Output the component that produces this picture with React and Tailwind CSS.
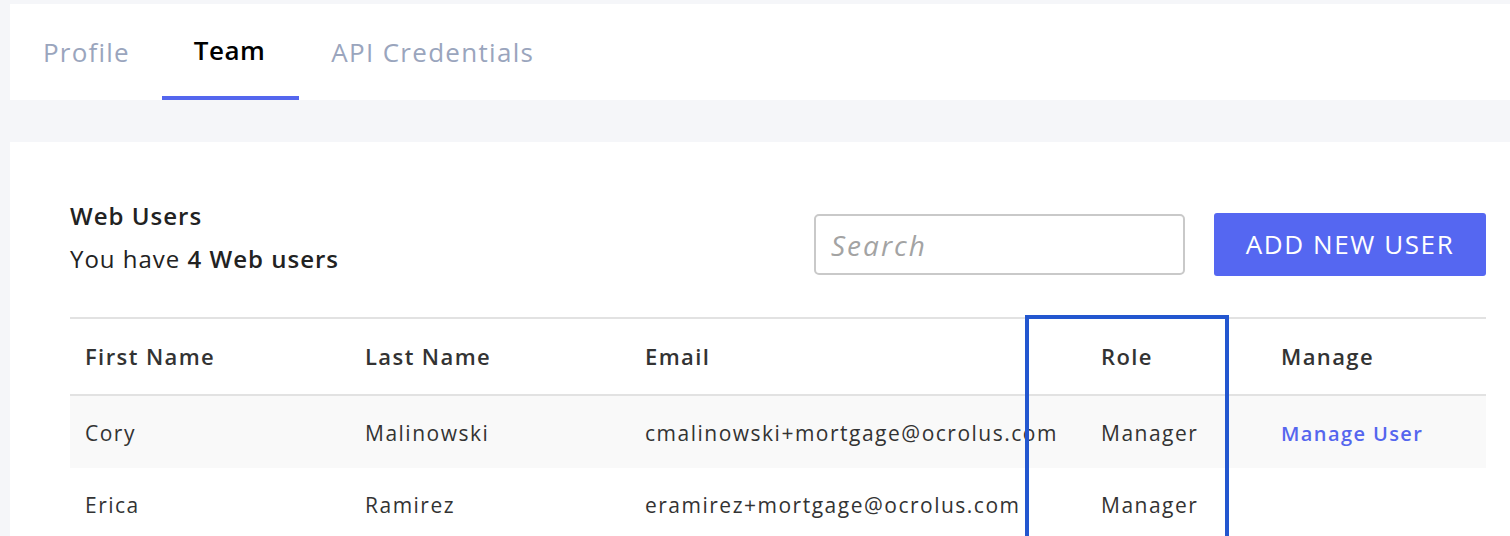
import React from "react";

const rows = [
  { first: "Cory", last: "Malinowski", email: "cmalinowski+mortgage@ocrolus.com", role: "Manager", manage: true },
  { first: "Erica", last: "Ramirez", email: "eramirez+mortgage@ocrolus.com", role: "Manager", manage: false },
];

export default function App() {
  return (
    <div className="min-h-[536px] bg-[#f5f6f9] pt-[4px] pl-[10px] overflow-hidden" style={{ fontFamily: '"Open Sans", "Liberation Sans", sans-serif' }}>
      <div className="bg-white h-[96px] flex items-end pl-[33px]">
        <div className="flex">
          <div className="h-[96px] flex items-center text-[26px] text-[#9aa5bd] tracking-[1.2px] pr-[32px]">Profile</div>
          <div className="h-[96px] flex flex-col">
            <div className="flex-1 flex items-center pl-[32px] pr-[34px] text-[26px] font-semibold text-black tracking-[0.5px]">Team</div>
            <div className="h-[4px] bg-[#5466ee]" />
          </div>
          <div className="h-[96px] flex items-center pl-[32px] text-[26px] text-[#9aa5bd] tracking-[1.3px]">API Credentials</div>
        </div>
      </div>
      <div className="h-[42px]" />
      <div className="bg-white pl-[60px] pr-[24px] pt-[59px] relative">
        <div className="flex items-start justify-between">
          <div className="flex flex-col">
            <div className="text-[24px] font-semibold text-[#222] leading-[30px] tracking-[1px]">Web Users</div>
            <div className="text-[24px] text-[#222] leading-[30px] mt-[13px] tracking-[1px]">
              You have <span className="font-semibold">4 Web users</span>
            </div>
          </div>
          <div className="flex items-center gap-[29px] mt-[12px]">
            <div className="w-[371px] h-[61px] border-2 border-[#c9c9c9] rounded-[5px] flex items-center px-[15px]">
              <span className="italic text-[28px] text-[#a3a3a3] tracking-[2px]">Search</span>
            </div>
            <button className="w-[272px] h-[63px] bg-[#5567f1] rounded-[3px] text-white text-[26px] font-medium tracking-[1.6px]">ADD NEW USER</button>
          </div>
        </div>
        <div className="mt-[41px] border-t-2 border-[#e2e2e2]">
          <div className="flex h-[77px] items-center border-b-2 border-[#e2e2e2] text-[22px] font-semibold text-[#333] tracking-[1.4px]">
            <div className="w-[280px] pl-[15px]">First Name</div>
            <div className="w-[280px] pl-[15px]">Last Name</div>
            <div className="w-[456px] pl-[15px]">Email</div>
            <div className="w-[180px] pl-[15px]">Role</div>
            <div className="pl-[15px]">Manage</div>
          </div>
          {rows.map((r, i) => (
            <div key={i} className={`flex h-[72px] items-center pt-[4px] text-[21px] text-[#333] tracking-[1.5px] ${i === 0 ? "bg-[#f9f9f9]" : "bg-white"}`}>
              <div className="w-[280px] pl-[15px]">{r.first}</div>
              <div className="w-[280px] pl-[15px]">{r.last}</div>
              <div className="w-[456px] pl-[15px] whitespace-nowrap">{r.email}</div>
              <div className="w-[180px] pl-[15px]">{r.role}</div>
              <div className="pl-[15px]">
                {r.manage && <span className="text-[#5566ee] font-semibold text-[20px] tracking-[1.4px]">Manage User</span>}
              </div>
            </div>
          ))}
        </div>
        <div className="absolute left-[1015px] top-[173px] w-[204px] h-[240px] border-4 border-[#2357cf]" />
      </div>
    </div>
  );
}
